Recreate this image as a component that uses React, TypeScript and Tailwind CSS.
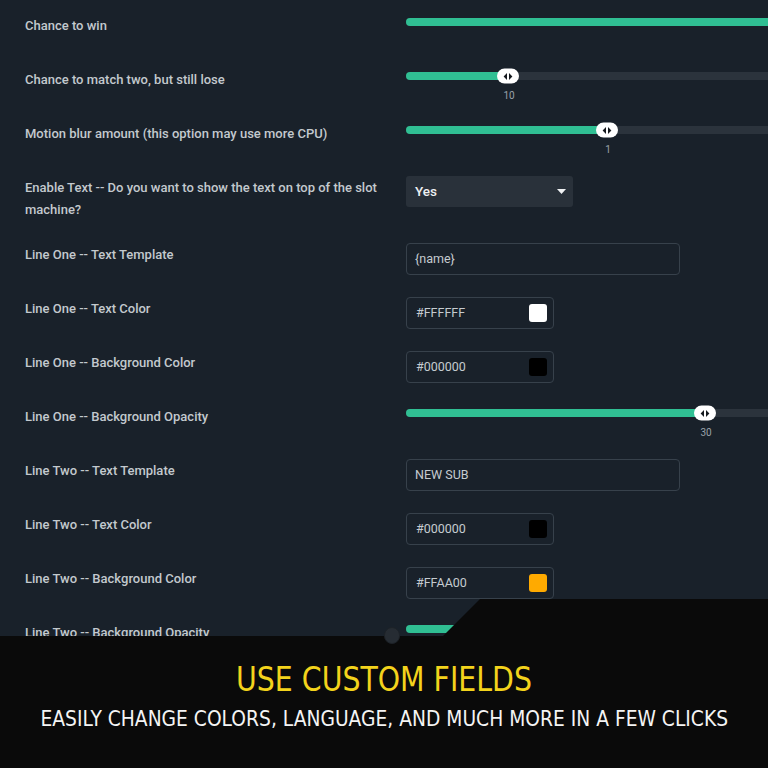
import React from "react";

const TEAL = "bg-[#30bf93]";

function Thumb() {
  return (
    <div className="absolute top-1/2 -translate-y-1/2 -translate-x-1/2 w-[22px] h-[15px] rounded-full bg-white flex items-center justify-center">
      <svg width="10" height="8" viewBox="0 0 10 8">
        <path d="M4 0.5 L0.6 4 L4 7.5Z M6 0.5 L9.4 4 L6 7.5Z" fill="#15191e" />
      </svg>
    </div>
  );
}

function Slider({ pos, value, full }: { pos?: number; value?: string; full?: boolean }) {
  return (
    <div className="relative h-[32px] pt-[4px]">
      <div className="relative h-[8px] w-[430px] rounded-full bg-[#2b333c]">
        <div
          className={`absolute left-0 top-0 h-full rounded-full ${TEAL}`}
          style={{ width: full ? "100%" : `${pos}px` }}
        />
        {!full && (
          <div className="absolute top-0 h-full" style={{ left: `${pos}px` }}>
            <Thumb />
          </div>
        )}
      </div>
      {!full && value && (
        <div
          className="absolute top-[21px] -translate-x-1/2 text-[10px] leading-[14px] text-[#9aa2a9]"
          style={{ left: `${(pos ?? 0) + 1}px` }}
        >
          {value}
        </div>
      )}
    </div>
  );
}

function TextInput({ value }: { value: string }) {
  return (
    <div className="h-[32px] w-[274px] border border-[#37414b] rounded-[4px] px-[8px] flex items-center text-[12.5px] text-[#c5cbd0]">
      {value}
    </div>
  );
}

function ColorInput({ value, color }: { value: string; color: string }) {
  return (
    <div className="h-[32px] w-[148px] border border-[#37414b] rounded-[4px] pl-[9px] pr-[6px] flex items-center justify-between text-[12.5px] text-[#c5cbd0]">
      <span>{value}</span>
      <span className="w-[18px] h-[18px] rounded-[3px]" style={{ backgroundColor: color }} />
    </div>
  );
}

function Select() {
  return (
    <div className="h-[31px] w-[167px] rounded-[3px] bg-[#29313a] pl-[9px] pr-[7px] flex items-center justify-between text-[13.5px] font-medium text-[#eef0f2]">
      <span>Yes</span>
      <svg width="9" height="5" viewBox="0 0 9 5">
        <path d="M0 0 H9 L4.5 5Z" fill="#f0f2f4" />
      </svg>
    </div>
  );
}

function Row({ label, children }: { label: string; children: React.ReactNode }) {
  return (
    <div className="flex items-start">
      <div className="w-[381px] shrink-0 pr-[4px] pt-[1px] text-[13px] leading-[22px] font-medium text-[#c3c9ce]">{label}</div>
      <div className="flex-1 min-w-0">{children}</div>
    </div>
  );
}

const bannerFont = { fontFamily: "'DejaVu Sans', sans-serif" };

export default function App() {
  return (
    <div
      className="relative w-[768px] h-[768px] overflow-hidden bg-[#19212a]"
      style={{ fontFamily: "Roboto, 'Noto Sans', sans-serif" }}
    >
      <div className="flex flex-col gap-[22px] pt-[14px] pl-[25px]">
        <Row label="Chance to win">
          <Slider full />
        </Row>
        <Row label="Chance to match two, but still lose">
          <Slider pos={102} value="10" />
        </Row>
        <Row label="Motion blur amount (this option may use more CPU)">
          <Slider pos={201} value="1" />
        </Row>
        <Row label="Enable Text -- Do you want to show the text on top of the slot machine?">
          <Select />
        </Row>
        <Row label="Line One -- Text Template">
          <TextInput value="{name}" />
        </Row>
        <Row label="Line One -- Text Color">
          <ColorInput value="#FFFFFF" color="#ffffff" />
        </Row>
        <Row label="Line One -- Background Color">
          <ColorInput value="#000000" color="#000000" />
        </Row>
        <Row label="Line One -- Background Opacity">
          <Slider pos={299} value="30" />
        </Row>
        <Row label="Line Two -- Text Template">
          <TextInput value="NEW SUB" />
        </Row>
        <Row label="Line Two -- Text Color">
          <ColorInput value="#000000" color="#000000" />
        </Row>
        <Row label="Line Two -- Background Color">
          <ColorInput value="#FFAA00" color="#ffaa00" />
        </Row>
        <Row label="Line Two -- Background Opacity">
          <Slider pos={120} value="" />
        </Row>
      </div>

      {/* banner overlay */}
      <div className="absolute left-0 top-[599px] w-[768px] h-[169px] bg-[#0a0a0a] [clip-path:polygon(480px_0,100%_0,100%_100%,0_100%,0_37px,443px_37px)]">
        <div className="absolute left-0 right-0 top-[37px] flex flex-col items-center">
          <div
            className="mt-[26px] text-[33px] leading-[36px] text-[#f3d31c] scale-x-[0.86] whitespace-nowrap"
            style={bannerFont}
          >
            USE CUSTOM FIELDS
          </div>
          <div
            className="mt-[8px] text-[21px] leading-[26px] text-[#f4f4f4] scale-x-[0.89] whitespace-nowrap"
            style={bannerFont}
          >
            EASILY CHANGE COLORS, LANGUAGE, AND MUCH MORE IN A FEW CLICKS
          </div>
        </div>
      </div>

      {/* pagination knob peeking over the banner edge */}
      <div className="absolute left-[384px] top-[627px] w-[16px] h-[17px] rounded-full bg-[#262c33] border border-[#1d2228]" />
    </div>
  );
}
